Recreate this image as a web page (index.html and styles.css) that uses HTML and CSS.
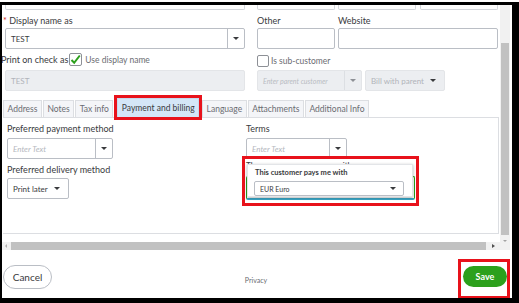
FILE: index.html
```html
<!DOCTYPE html>
<html lang="en">
<head>
    <meta charset="UTF-8">
    <meta name="viewport" content="width=device-width, initial-scale=1.0">
    <title>Customer information</title>
    <link rel="stylesheet" href="styles.css">
</head>
<body>
    <div class="sliver"></div>
    <div class="frame">
        <div class="window">
            <div class="viewport">
                <div class="content">
                    <!-- fields scrolled above the top edge -->
                    <div class="cut-row">
                        <span class="cut wide"></span>
                        <span class="cut-group">
                            <span class="cut"></span>
                            <span class="cut"></span>
                            <span class="cut last"></span>
                        </span>
                    </div>

                    <div class="row label-row">
                        <div class="col-left">
                            <span class="label"><span class="req">*</span> Display name as</span>
                        </div>
                        <div class="col-right">
                            <span class="label w-other">Other</span>
                            <span class="label">Website</span>
                        </div>
                    </div>

                    <div class="row">
                        <div class="col-left">
                            <div class="field select">
                                <span class="value">TEST</span>
                                <span class="arrow-cell"><span class="caret"></span></span>
                            </div>
                        </div>
                        <div class="col-right">
                            <div class="field w-other"></div>
                            <div class="field w-web"></div>
                        </div>
                    </div>

                    <div class="row check-row">
                        <div class="col-left">
                            <span class="label print-label">Print on check as</span>
                            <span class="checkbox">
                                <svg width="11" height="11" viewBox="0 0 11 11"><path d="M1.5 6 L4.2 8.8 L9.8 1.5" fill="none" stroke="#2ca01c" stroke-width="2"/></svg>
                            </span>
                            <span class="check-text">Use display name</span>
                        </div>
                        <div class="col-right">
                            <span class="checkbox sub"></span>
                            <span class="check-text">Is sub-customer</span>
                        </div>
                    </div>

                    <div class="row">
                        <div class="col-left">
                            <div class="field disabled"><span class="value">TEST</span></div>
                        </div>
                        <div class="col-right">
                            <div class="field disabled select w-parent">
                                <span class="value placeholder">Enter parent customer</span>
                                <span class="arrow-cell"><span class="caret light"></span></span>
                            </div>
                            <div class="field disabled w-bill">
                                <span class="value">Bill with parent</span>
                                <span class="caret"></span>
                            </div>
                        </div>
                    </div>

                    <div class="tabs">
                        <span class="tab">Address</span>
                        <span class="tab">Notes</span>
                        <span class="tab">Tax info</span>
                        <span class="tab active">Payment and billing</span>
                        <span class="tab">Language</span>
                        <span class="tab">Attachments</span>
                        <span class="tab">Additional Info</span>
                    </div>

                    <div class="panel">
                        <div class="panel-col left">
                            <div class="label">Preferred payment method</div>
                            <div class="field select w-pay">
                                <span class="value placeholder">Enter Text</span>
                                <span class="arrow-cell"><span class="caret"></span></span>
                            </div>
                            <div class="label second">Preferred delivery method</div>
                            <div class="field w-delivery">
                                <span class="value">Print later</span>
                                <span class="caret"></span>
                            </div>
                        </div>
                        <div class="panel-col">
                            <div class="label">Terms</div>
                            <div class="field select w-terms">
                                <span class="value placeholder">Enter Text</span>
                                <span class="arrow-cell"><span class="caret"></span></span>
                            </div>
                            <div class="currency">
                                <div class="small-label"><span>Th</span><span class="tail">ith</span></div>
                                <div class="currency-input"></div>

                                <div class="popover">
                                    <div class="card">
                                        <div class="card-label">This customer pays me with</div>
                                        <div class="card-select">
                                            <span>EUR Euro</span>
                                            <span class="caret"></span>
                                        </div>
                                    </div>
                                </div>
                            </div>
                        </div>
                    </div>
                </div>
                <div class="vscroll">
                    <div class="vthumb"></div>
                    <span class="caret tiny"></span>
                </div>
            </div>

            <div class="hscroll">
                <div class="htrack">
                    <span class="harrow left"></span>
                    <span class="hthumb"></span>
                    <span class="harrow right"></span>
                </div>
                <div class="corner"></div>
            </div>

            <div class="footer">
                <button class="cancel">Cancel</button>
                <span class="privacy">Privacy</span>
                <span class="save-mark"><button class="save">Save</button></span>
            </div>
        </div>
    </div>
</body>
</html>
```

FILE: styles.css
```css
body {
    margin: 0;
    width: 519px;
    height: 303px;
    overflow: hidden;
    background: #000;
    font-family: Lato, 'Open Sans', sans-serif;
    color: #393a3d;
}

.sliver {
    height: 2px;
    background: #fff;
}

.frame {
    padding: 3px 7px 0 2px;
}

.window {
    height: 293px;
    background: #fff;
    display: flex;
    flex-direction: column;
    overflow: hidden;
}

.viewport {
    display: flex;
    height: 244px;
    padding-right: 2px;
}

.content {
    width: 498px;
    padding-left: 3px;
    box-sizing: border-box;
    overflow: hidden;
}

/* Top fields that are cut off by the scroll */
.cut-row {
    display: flex;
    gap: 12px;
    height: 5px;
}

.cut {
    display: block;
    width: 78px;
    height: 5px;
    box-sizing: border-box;
    border: 1px solid #d4d7dc;
    border-top: none;
    border-radius: 0 0 2px 2px;
}

.cut.wide {
    width: 240px;
}

.cut-group {
    display: flex;
    gap: 3px;
}

.cut.last {
    margin-left: 1px;
}

/* Form rows */
.row {
    display: flex;
    gap: 12px;
}

.col-left {
    width: 240px;
    display: flex;
    align-items: center;
}

.col-right {
    width: 241px;
    display: flex;
    align-items: center;
    gap: 3px;
}

.label-row {
    height: 18px;
    align-items: flex-end;
}

.label {
    font-size: 9px;
    line-height: 12px;
    color: #393a3d;
    white-space: nowrap;
}

.label-row .label {
    margin-bottom: 1px;
}

.req {
    color: #d52b1e;
    margin-left: -2px;
}

.w-other {
    width: 78px;
}

.w-web {
    width: 160px;
}

.field {
    height: 21px;
    box-sizing: border-box;
    border: 1px solid #babec5;
    border-radius: 2px;
    display: flex;
    align-items: center;
    font-size: 8px;
    background: #fff;
}

.col-left .field {
    width: 240px;
}

.field .value {
    flex: 1;
    padding-left: 5px;
    white-space: nowrap;
    overflow: hidden;
}

.placeholder {
    font-style: italic;
    color: #b5b8be;
}

.arrow-cell {
    width: 16px;
    height: 100%;
    border-left: 1px solid #babec5;
    display: flex;
    align-items: center;
    justify-content: center;
}

.caret {
    display: inline-block;
    width: 0;
    height: 0;
    border-left: 3px solid transparent;
    border-right: 3px solid transparent;
    border-top: 3px solid #393a3d;
}

.caret.light {
    border-top-color: #8d9096;
}

.field.disabled {
    background: #eceef1;
    border-color: #e3e5e8;
    color: #b1b4ba;
}

.field.disabled .arrow-cell {
    border-left-color: #dcdfe3;
}

.w-parent {
    width: 105px;
}

.w-parent .value {
    font-size: 7px;
    color: #b9bcc2;
}

.w-bill {
    width: 80px;
    color: #8d9096;
    padding-right: 8px;
}

.w-bill .caret {
    border-top-color: #393a3d;
}

/* Checkbox row */
.check-row {
    height: 21px;
}

.print-label {
    margin-left: -4px;
}

.checkbox {
    width: 13px;
    height: 13px;
    box-sizing: border-box;
    border: 1px solid #8d9096;
    border-radius: 2px;
    margin-left: 1px;
    display: flex;
    align-items: center;
    justify-content: center;
}

.checkbox.sub {
    margin: 3px 0 0 0;
    width: 12px;
    height: 12px;
}

.check-text {
    font-size: 8.5px;
    color: #6b6c72;
    margin-left: 3px;
    white-space: nowrap;
}

.col-right .check-text {
    margin-top: 2px;
    margin-left: -1px;
}

/* Tabs */
.tabs {
    display: flex;
    align-items: flex-end;
    gap: 1px;
    height: 19px;
    margin: 7px 0 0 -2px;
}

.tab {
    height: 17px;
    box-sizing: border-box;
    padding: 0 3.5px;
    background: #f4f5f8;
    border: 1px solid #dcdee2;
    border-bottom: none;
    font-size: 8.5px;
    line-height: 16px;
    color: #6b6c72;
    white-space: nowrap;
}

.tab.active {
    height: 19px;
    line-height: 18px;
    margin: 0 2px 0 3px;
    background: #d4e6f7;
    border-color: #c5d9ee;
    color: #393a3d;
    outline: 3px solid #e8121b;
}

.panel {
    display: flex;
    height: 117px;
    width: 496px;
    box-sizing: border-box;
    margin-left: -2px;
    padding: 5px 0 0 4px;
    border: 1px solid #dcdee2;
    border-left: none;
}

.panel-col {
    display: flex;
    flex-direction: column;
    align-items: flex-start;
}

.panel-col.left {
    width: 239px;
}

.panel .field {
    margin-top: 3px;
    height: 21px;
}

.panel .label.second {
    margin-top: 5px;
}

.panel .label + .field {
    margin-top: 3px;
}

.panel .second + .field {
    margin-top: 2px;
}

.w-pay {
    width: 106px;
}

.w-terms {
    width: 101px;
}

.w-delivery {
    width: 62px;
    padding-right: 8px;
}

.w-delivery .value {
    color: #393a3d;
}

/* Currency field with the opened popover */
.currency {
    position: relative;
    width: 169px;
    margin-top: 1px;
}

.small-label {
    display: flex;
    justify-content: space-between;
    width: 106px;
    font-size: 8px;
    line-height: 10px;
    color: #393a3d;
}

.currency-input {
    height: 24px;
    margin-top: 6px;
    box-sizing: border-box;
    border: 1px solid #2ca01c;
    border-bottom: 2px solid #3aa6c6;
    border-radius: 2px;
}

.popover {
    position: absolute;
    top: -4px;
    left: -4px;
    width: 177px;
    height: 50px;
    box-sizing: border-box;
    border: 3px solid #e8121b;
    padding: 5px 0 0 2px;
}

.card {
    width: 166px;
    height: 33px;
    box-sizing: border-box;
    background: #fff;
    border: 1px solid #e3e5e8;
    box-shadow: 0 1px 3px rgba(0, 0, 0, 0.3);
    padding: 3px 0 0 6px;
}

.card-label {
    font-size: 7.5px;
    line-height: 9px;
    font-weight: 700;
    color: #393a3d;
    margin-left: 1px;
}

.card-select {
    width: 150px;
    height: 15px;
    margin-top: 4px;
    box-sizing: border-box;
    border: 1px solid #babec5;
    border-radius: 2px;
    display: flex;
    align-items: center;
    justify-content: space-between;
    padding: 0 7px 0 5px;
    font-size: 7px;
}

/* Scrollbars */
.vscroll {
    width: 10px;
    background: #f1f1f1;
    padding-top: 38px;
    display: flex;
    flex-direction: column;
    align-items: center;
}

.vthumb {
    width: 8px;
    height: 192px;
    background: #c1c1c1;
}

.caret.tiny {
    margin-top: 5px;
    border-width: 2px 2px 0 2px;
    border-top-color: #a3a3a3;
}

.hscroll {
    display: flex;
    height: 10px;
    padding-right: 2px;
}

.htrack {
    width: 498px;
    background: #f1f1f1;
    display: flex;
    align-items: center;
    padding: 0 5px 0 3px;
    box-sizing: border-box;
}

.hthumb {
    width: 475px;
    height: 8px;
    margin: 0 6px 0 4px;
    background: #c1c1c1;
}

.harrow {
    width: 0;
    height: 0;
    border-top: 2px solid transparent;
    border-bottom: 2px solid transparent;
}

.harrow.left {
    border-right: 2px solid #b0b0b0;
}

.harrow.right {
    border-left: 3px solid #505050;
}

.corner {
    width: 10px;
    background: #f1f1f1;
}

/* Footer */
.footer {
    flex: 1;
    display: flex;
    align-items: flex-start;
    justify-content: space-between;
    padding: 0 2px 0 1px;
}

.cancel {
    margin-top: 15px;
    width: 49px;
    height: 24px;
    border: 1px solid #babec5;
    border-radius: 12px;
    background: #fff;
    font-family: inherit;
    font-size: 10px;
    color: #393a3d;
    padding: 0;
}

.privacy {
    margin: 26px 0 0 2px;
    font-size: 7px;
    color: #6b6c72;
}

.save-mark {
    margin-top: 9px;
    width: 52px;
    height: 40px;
    box-sizing: border-box;
    border: 3px solid #e8121b;
    padding: 4px 0 0 2px;
}

.save {
    display: block;
    width: 44px;
    height: 21px;
    border: none;
    border-radius: 11px;
    background: #2ca01c;
    color: #fff;
    font-family: inherit;
    font-size: 9px;
    font-weight: 700;
    padding: 0;
}
```
